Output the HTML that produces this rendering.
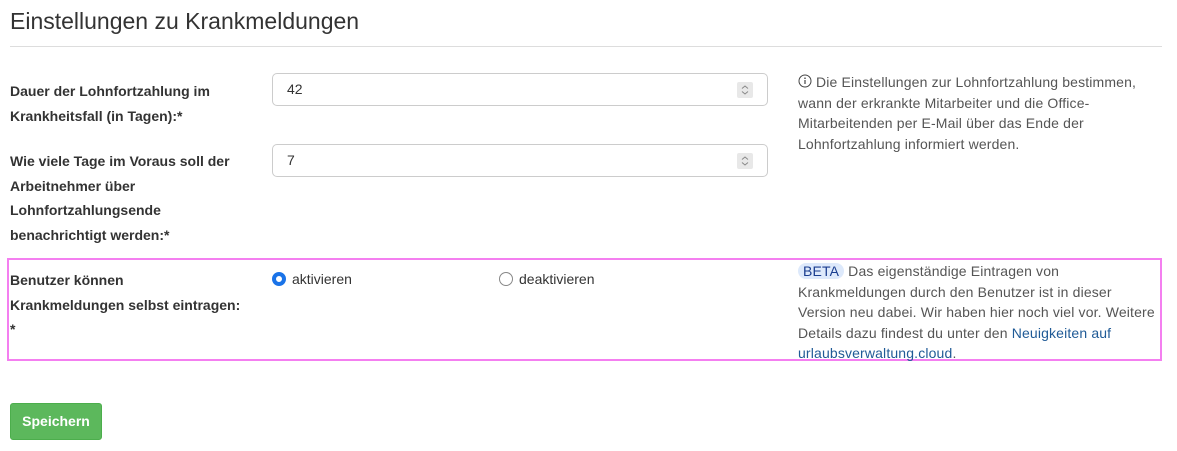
<!DOCTYPE html>
<html><head><meta charset="utf-8"><style>
body{margin:0;width:1177px;height:451px;background:#fff;font-family:"Liberation Sans",sans-serif;color:#333;position:relative;overflow:hidden}
.a{position:absolute}
h1{position:absolute;left:10px;top:8px;margin:0;font-size:23px;font-weight:normal;color:#333}
.hr{left:10px;top:46px;width:1152px;height:1px;background:#ddd}
.lbl{font-size:14px;font-weight:bold;line-height:24.5px;color:#333}
.inp{border:1px solid #ccc;border-radius:5px;box-sizing:border-box;width:496px;height:33px;left:272px;font-size:14px;padding:7px 0 0 14px}
.spin{position:absolute;right:14px;top:8px;width:16px;height:16px;background:#e8e8e8;border-radius:2px}
.help{font-size:14px;line-height:20.5px;color:#555;letter-spacing:0.15px}
.radio{width:14px;height:14px;border-radius:50%;box-sizing:border-box}
</style></head><body>
<h1>Einstellungen zu Krankmeldungen</h1>
<div class="a hr"></div>
<div class="a lbl" style="left:10px;top:79px">Dauer der Lohnfortzahlung im<br>Krankheitsfall (in Tagen):*</div>
<div class="a inp" style="top:73px">42<div class="spin"><svg width="16" height="16" viewBox="0 0 16 16"><path d="M5 6.5L8 4l3 2.5M5 9.5L8 12l3-2.5" fill="none" stroke="#888" stroke-width="1"/></svg></div></div>
<div class="a lbl" style="left:10px;top:149px">Wie viele Tage im Voraus soll der<br>Arbeitnehmer über<br>Lohnfortzahlungsende<br>benachrichtigt werden:*</div>
<div class="a inp" style="top:144px">7<div class="spin"><svg width="16" height="16" viewBox="0 0 16 16"><path d="M5 6.5L8 4l3 2.5M5 9.5L8 12l3-2.5" fill="none" stroke="#888" stroke-width="1"/></svg></div></div>
<div class="a help" style="left:798px;top:72px;width:362px"><svg width="14" height="14" viewBox="0 0 14 14" style="vertical-align:-1px"><circle cx="7" cy="7" r="6" fill="none" stroke="#444" stroke-width="1"/><path d="M7 6v4" stroke="#444" stroke-width="1.2"/><circle cx="7" cy="4.2" r=".8" fill="#444"/></svg> Die Einstellungen zur Lohnfortzahlung bestimmen, wann der erkrankte Mitarbeiter und die Office-<br>Mitarbeitenden per E-Mail über das Ende der<br>Lohnfortzahlung informiert werden.</div>
<div class="a" style="left:7px;top:258px;width:1155px;height:103px;box-sizing:border-box;border:2px solid #f47ff0"></div>
<div class="a lbl" style="left:10px;top:268px">Benutzer können<br>Krankmeldungen selbst eintragen:<br>*</div>
<div class="a radio" style="left:272px;top:272px;border:4px solid #1a73e8;background:#fff"></div>
<div class="a" style="left:292px;top:271px;font-size:14px">aktivieren</div>
<div class="a radio" style="left:499px;top:272px;border:1.5px solid #888"></div>
<div class="a" style="left:519px;top:271px;font-size:14px">deaktivieren</div>
<div class="a help" style="left:798px;top:261px;width:362px"><span style="background:#dde9fb;color:#1a3d8f;border-radius:9px;padding:0 5px">BETA</span> Das eigenständige Eintragen von<br>Krankmeldungen durch den Benutzer ist in dieser<br>Version neu dabei. Wir haben hier noch viel vor. Weitere<br>Details dazu findest du unter den <span style="color:#1f5a96">Neuigkeiten auf<br>urlaubsverwaltung.cloud</span>.</div>
<div class="a" style="left:10px;top:403px;width:92px;height:37px;background:#5cb85c;border:1px solid #4cae4c;border-radius:3px;box-sizing:border-box;color:#fff;font-weight:bold;font-size:14px;text-align:center;line-height:35px">Speichern</div>
</body></html>
